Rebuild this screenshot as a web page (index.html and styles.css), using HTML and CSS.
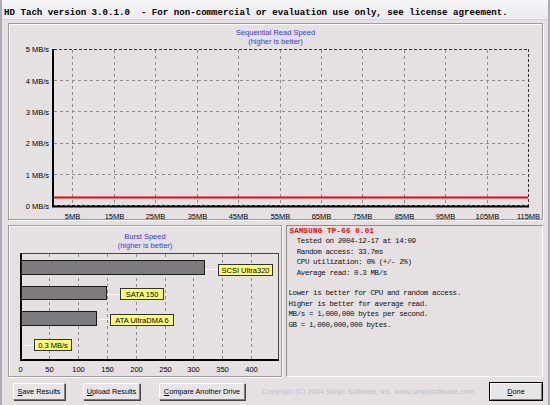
FILE: index.html
```html
<!DOCTYPE html>
<html>
<head>
<meta charset="utf-8">
<link rel="stylesheet" href="styles.css">
</head>
<body>
<div class="window">
  <div class="titlebar"><span class="title-text">HD Tach version 3.0.1.0  - For non-commercial or evaluation use only, see license agreement.</span></div>
  <div class="main">
    <div class="panel top-panel">
      <svg class="chart" width="533" height="195" viewBox="9 25 533 195">
        <text class="ctitle" x="275.5" y="35.5">Sequential Read Speed</text>
        <text class="ctitle" x="275.5" y="45">(higher is better)</text>
        <g class="grid">
          <line x1="72.5" y1="51" x2="72.5" y2="207"/>
          <line x1="114.5" y1="51" x2="114.5" y2="207"/>
          <line x1="155.5" y1="51" x2="155.5" y2="207"/>
          <line x1="197.5" y1="51" x2="197.5" y2="207"/>
          <line x1="238.5" y1="51" x2="238.5" y2="207"/>
          <line x1="280.5" y1="51" x2="280.5" y2="207"/>
          <line x1="321.5" y1="51" x2="321.5" y2="207"/>
          <line x1="362.5" y1="51" x2="362.5" y2="207"/>
          <line x1="404.5" y1="51" x2="404.5" y2="207"/>
          <line x1="445.5" y1="51" x2="445.5" y2="207"/>
          <line x1="487.5" y1="51" x2="487.5" y2="207"/>
          <line x1="54" y1="81.5" x2="528" y2="81.5"/>
          <line x1="54" y1="112.5" x2="528" y2="112.5"/>
          <line x1="54" y1="144.5" x2="528" y2="144.5"/>
          <line x1="54" y1="175.5" x2="528" y2="175.5"/>
        </g>
        <g class="frame">
          <line x1="54" y1="50.5" x2="529" y2="50.5"/>
          <line x1="528.5" y1="50" x2="528.5" y2="207"/>
          <line x1="52" y1="206.5" x2="529" y2="206.5"/>
        </g>
        <line class="axis" x1="53" y1="50" x2="53" y2="208"/>
        <line class="axis" x1="52" y1="207.5" x2="529" y2="207.5"/>
        <line class="redline" x1="54" y1="198.5" x2="528" y2="198.5"/>
        <g class="ylab">
          <text x="49" y="53">5 MB/s</text>
          <text x="49" y="85">4 MB/s</text>
          <text x="49" y="116">3 MB/s</text>
          <text x="49" y="147">2 MB/s</text>
          <text x="49" y="179">1 MB/s</text>
          <text x="49" y="210">0 MB/s</text>
        </g>
        <g class="xlab">
          <text x="72.5" y="219.5">5MB</text>
          <text x="114.5" y="219.5">15MB</text>
          <text x="155.5" y="219.5">25MB</text>
          <text x="197.5" y="219.5">35MB</text>
          <text x="238.5" y="219.5">45MB</text>
          <text x="280.5" y="219.5">55MB</text>
          <text x="321.5" y="219.5">65MB</text>
          <text x="362.5" y="219.5">75MB</text>
          <text x="404.5" y="219.5">85MB</text>
          <text x="445.5" y="219.5">95MB</text>
          <text x="487.5" y="219.5">105MB</text>
          <text x="528.5" y="219.5">115MB</text>
        </g>
      </svg>
    </div>
    <div class="row">
      <div class="panel burst-panel">
        <svg class="chart" width="272" height="150" viewBox="9 227 272 150">
          <text class="ctitle" x="145" y="239.5">Burst Speed</text>
          <text class="ctitle" x="145" y="248.5">(higher is better)</text>
          <g class="grid">
            <line x1="49.5" y1="255" x2="49.5" y2="360"/>
            <line x1="78.5" y1="255" x2="78.5" y2="360"/>
            <line x1="107.5" y1="255" x2="107.5" y2="360"/>
            <line x1="136.5" y1="255" x2="136.5" y2="360"/>
            <line x1="165.5" y1="255" x2="165.5" y2="360"/>
            <line x1="193.5" y1="255" x2="193.5" y2="360"/>
            <line x1="222.5" y1="255" x2="222.5" y2="360"/>
            <line x1="251.5" y1="255" x2="251.5" y2="360"/>
          </g>
          <g class="bframe">
            <line x1="20" y1="254.5" x2="279" y2="254.5"/>
            <line x1="278.5" y1="254" x2="278.5" y2="361"/>
          </g>
          <line class="axis" x1="21" y1="254" x2="21" y2="362"/>
          <line class="axis" x1="20" y1="361" x2="279" y2="361"/>
          <g class="connect">
            <line x1="205" y1="270.5" x2="218" y2="270.5"/>
            <line x1="107" y1="295.5" x2="120" y2="295.5"/>
            <line x1="98" y1="320.5" x2="110" y2="320.5"/>
            <line x1="22" y1="346.5" x2="34" y2="346.5"/>
          </g>
          <g class="bars">
            <rect x="21.5" y="261.5" width="183" height="14"/>
            <rect x="21.5" y="287.5" width="85" height="13"/>
            <rect x="21.5" y="312.5" width="75" height="14"/>
          </g>
          <g class="tag">
            <rect x="218.5" y="265.5" width="54" height="11"/>
            <rect x="120.5" y="289.5" width="43" height="11"/>
            <rect x="110.5" y="315.5" width="63" height="11"/>
            <rect x="34.5" y="340.5" width="37" height="11"/>
          </g>
          <g class="tagtext">
            <text x="245.5" y="273.8">SCSI Ultra320</text>
            <text x="142" y="297.8">SATA 150</text>
            <text x="142" y="323.8">ATA UltraDMA 6</text>
            <text x="53" y="348.8">0.3 MB/s</text>
          </g>
          <g class="xlab">
            <text x="20.5" y="372.5">0</text>
            <text x="49.5" y="372.5">50</text>
            <text x="78.5" y="372.5">100</text>
            <text x="107.5" y="372.5">150</text>
            <text x="136.5" y="372.5">200</text>
            <text x="165.5" y="372.5">250</text>
            <text x="193.5" y="372.5">300</text>
            <text x="222.5" y="372.5">350</text>
            <text x="251.5" y="372.5">400</text>
          </g>
        </svg>
      </div>
      <div class="info">
<div class="drive">SAMSUNG TP-66 0.01</div>
<div class="line">  Tested on 2004-12-17 at 14:09</div>
<div class="line">  Random access: 33.7ms</div>
<div class="line">  CPU utilization: 0% (+/- 2%)</div>
<div class="line">  Average read: 0.3 MB/s</div>
<div class="line"> </div>
<div class="line">Lower is better for CPU and random access.</div>
<div class="line">Higher is better for average read.</div>
<div class="line">MB/s = 1,000,000 bytes per second.</div>
<div class="line">GB = 1,000,000,000 bytes.</div>
      </div>
    </div>
    <div class="buttons">
      <button class="btn btn-save"><u>S</u>ave Results</button>
      <button class="btn btn-upload"><u>U</u>pload Results</button>
      <button class="btn btn-compare"><u>C</u>ompare Another Drive</button>
      <span class="copyright">Copyright (C) 2004 Simpli Software, Inc. www.simplisoftware.com</span>
      <button class="btn btn-done"><u>D</u>one</button>
    </div>
  </div>
</div>
</body>
</html>
```

FILE: styles.css
```css
* { box-sizing: border-box; }
html, body { margin: 0; padding: 0; }
body {
  width: 550px;
  height: 405px;
  overflow: hidden;
  background: #e5e1e2;
  font-family: "Liberation Sans", Arial, sans-serif;
}
.window {
  width: 550px;
  height: 405px;
  border-left: 2px solid #aeaab8;
  border-right: 2px solid #aeaab8;
  display: flex;
  flex-direction: column;
}
.titlebar {
  height: 20px;
  padding-left: 2px;
  background: linear-gradient(#f6f5f8, #eceaee);
  border-bottom: 1px solid #d6d3da;
  line-height: 20px;
}
.title-text {
  font-family: "Liberation Mono", "Courier New", monospace;
  font-weight: bold;
  font-size: 9.13px;
  white-space: pre;
  color: #000;
}
.main {
  padding: 3px 5px 0 6px;
  display: flex;
  flex-direction: column;
}
.panel {
  border: 1px solid #a19ca2;
  box-shadow: inset 1px 1px 0 #fbfbfb, 1px 1px 0 #fbfbfb;
}
.top-panel { height: 197px; }
.chart { display: block; }
.row {
  display: flex;
  margin-top: 5px;
  height: 152px;
  gap: 4px;
}
.burst-panel { width: 274px; height: 152px; }
.info {
  width: 257px;
  height: 152px;
  border-top: 1px solid #8e8a90;
  border-left: 1px solid #8e8a90;
  border-right: 1px solid #fbfbfb;
  border-bottom: 1px solid #fbfbfb;
  padding: 0 0 0 1.5px;
  font-family: "Liberation Mono", "Courier New", monospace;
  font-size: 7.5px;
  letter-spacing: -0.4px;
  line-height: 10.4px;
  color: #111;
}
.info .line { white-space: pre; height: 10.4px; }
.info .drive {
  color: #ff0000;
  font-weight: bold;
  letter-spacing: 0.2px;
  white-space: pre;
  height: 10.4px;
  padding-left: 1px;
}

/* chart elements */
.chart text { font-family: "Liberation Sans", Arial, sans-serif; font-size: 7.5px; fill: #000; }
.chart .ctitle { fill: #3535ff; text-anchor: middle; }
.ylab text { text-anchor: end; }
.xlab text { text-anchor: middle; }
.grid line { stroke: #8f8c8f; stroke-width: 1; stroke-dasharray: 3 3; }
.frame line { stroke: #333; stroke-width: 1; stroke-dasharray: 3 2; }
.bframe line { stroke: #444; stroke-width: 1; }
.axis { stroke: #000; stroke-width: 2; }
.redline { stroke: #ff0000; stroke-width: 2; }
.connect line { stroke: #f7f7f7; stroke-width: 1; }
.bars rect { fill: #7d7b7d; stroke: #1a1a1a; stroke-width: 1; }
.tag rect { fill: #ffff73; stroke: #333; stroke-width: 1; }
.tagtext text { text-anchor: middle; }

/* buttons */
.buttons {
  display: flex;
  align-items: center;
  margin-top: 6px;
  height: 17px;
  padding-left: 5px;
}
.btn {
  height: 17px;
  padding: 0;
  margin: 0;
  font-family: "Liberation Sans", Arial, sans-serif;
  font-size: 7.3px;
  color: #000;
  background: #e8e5e8;
  border-top: 1px solid #fdfdfd;
  border-left: 1px solid #fdfdfd;
  border-right: 1px solid #7e7a80;
  border-bottom: 1px solid #7e7a80;
  box-shadow: 1px 1px 0 #4a474c;
  border-radius: 0;
}
.btn u { text-decoration: underline; }
.btn-save { width: 52px; }
.btn-upload { width: 57px; margin-left: 18px; }
.btn-compare { width: 86px; margin-left: 19px; }
.copyright {
  margin-left: 17px;
  font-size: 7.3px;
  color: #c3bfc4;
  white-space: nowrap;
  width: 228px;
}
.btn-done {
  width: 52px;
  outline: 1px solid #000;
}
```
